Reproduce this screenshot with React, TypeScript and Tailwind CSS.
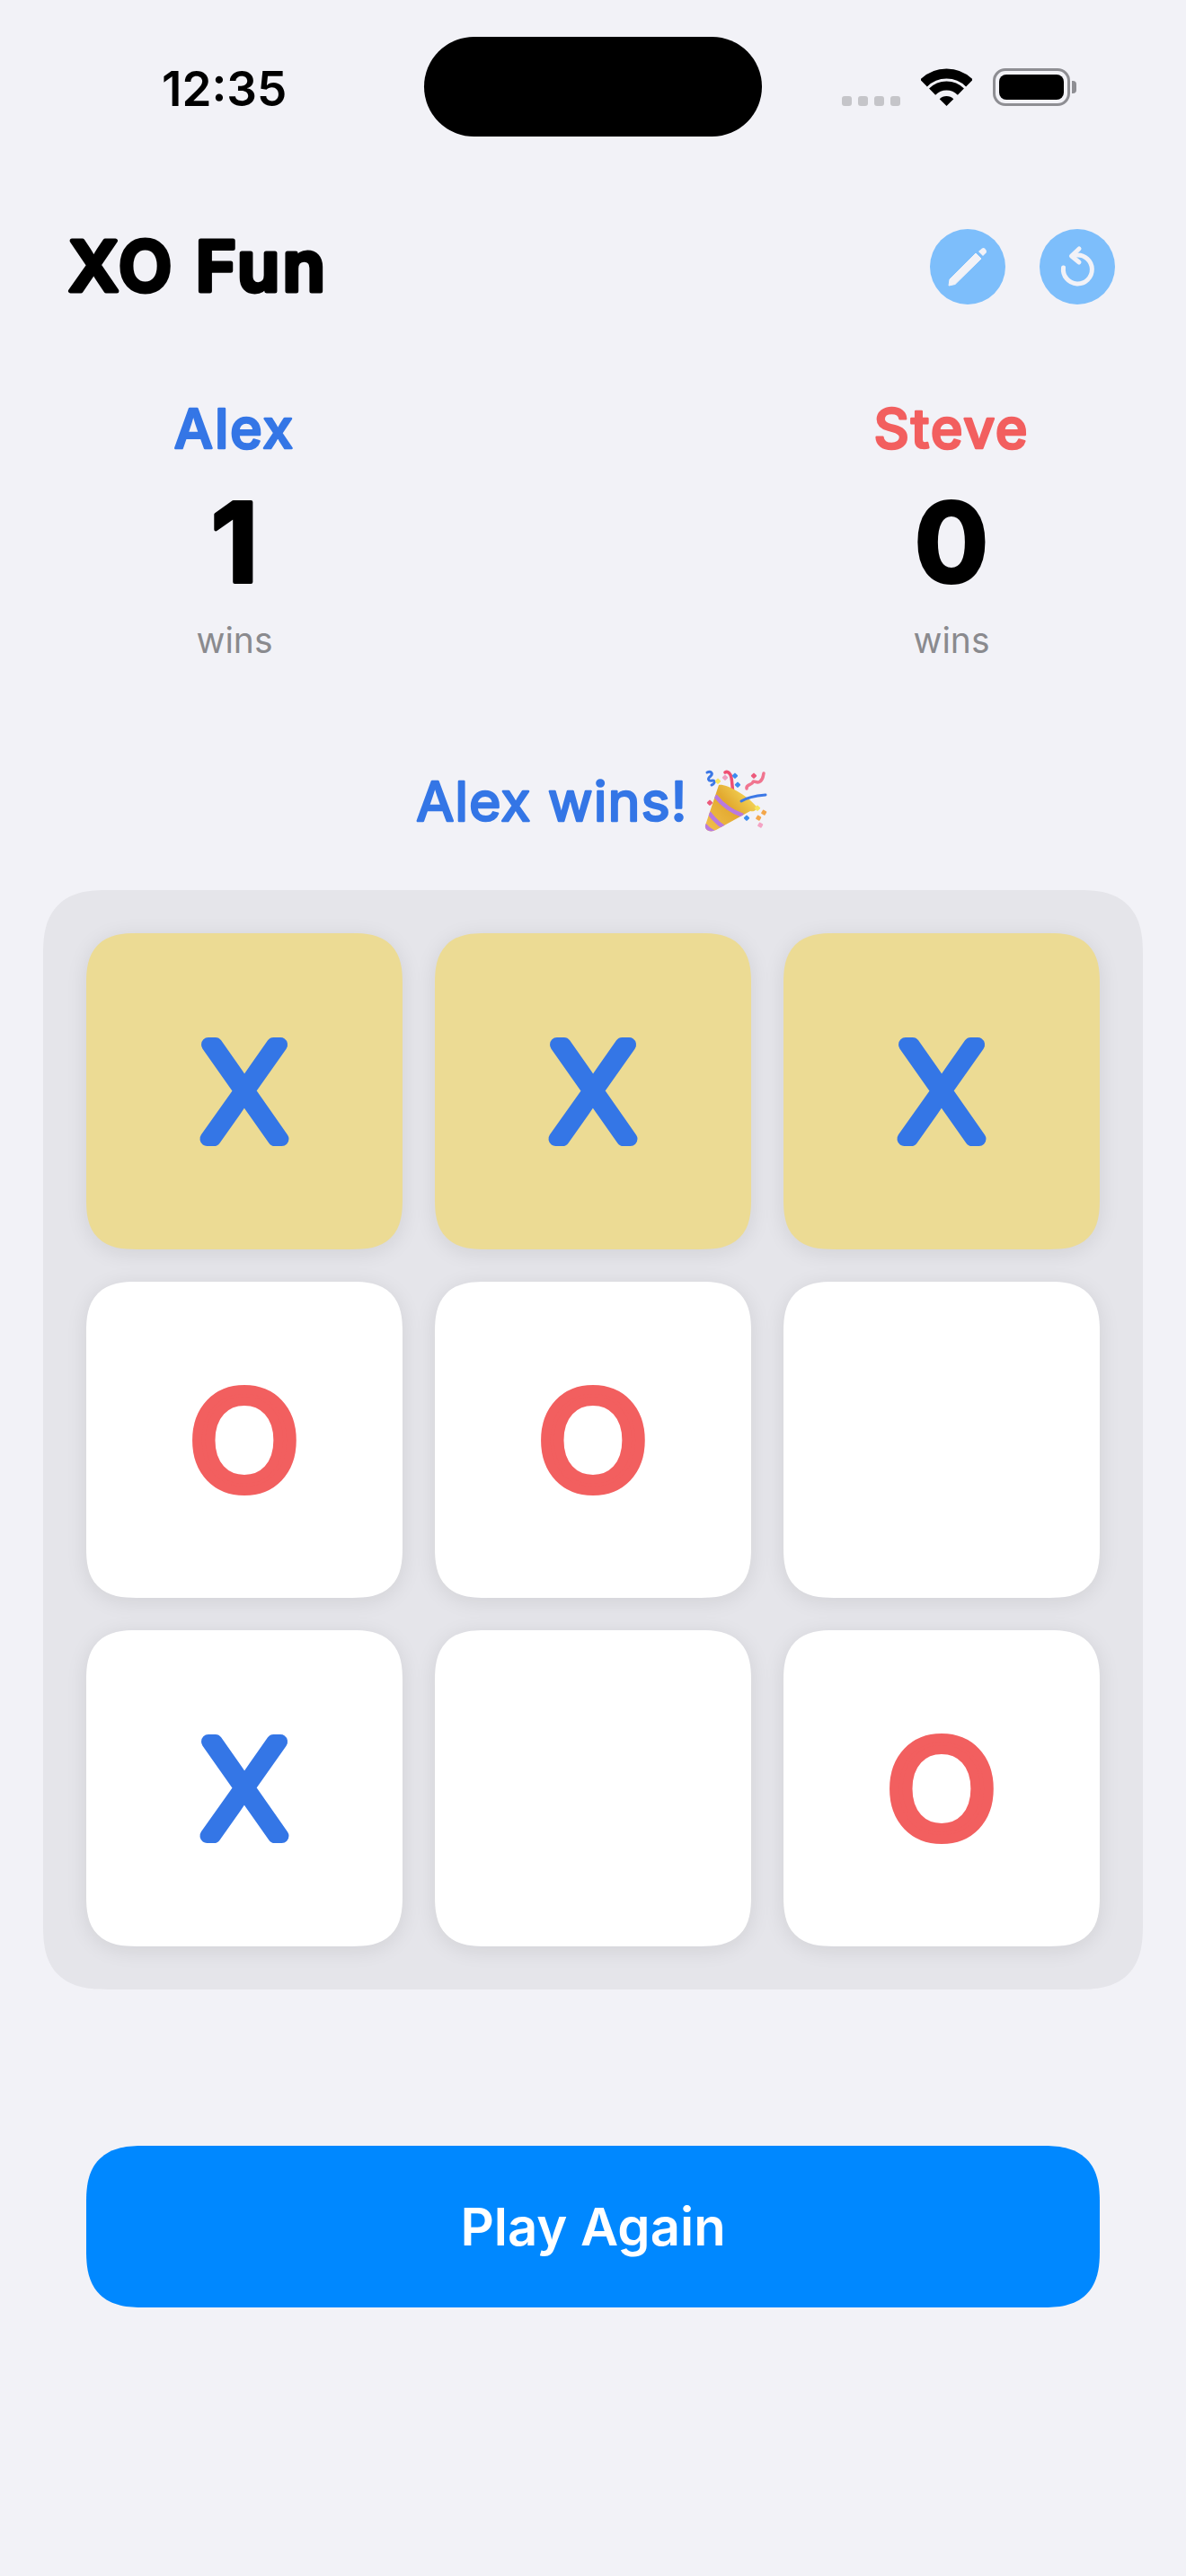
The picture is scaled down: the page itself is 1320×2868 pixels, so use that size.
import React from "react";

type Mark = "X" | "O" | "";

const blue = "#3476e6";
const red = "#f25f5f";

const board: { mark: Mark; win?: boolean }[] = [
  { mark: "X", win: true },
  { mark: "X", win: true },
  { mark: "X", win: true },
  { mark: "O" },
  { mark: "O" },
  { mark: "" },
  { mark: "X" },
  { mark: "" },
  { mark: "O" },
];

// the app uses a rounded font, a round-joined stroke on svg text gets close to it
const RoundText = ({
  text,
  w,
  h,
  y,
  size,
  weight,
  stroke,
  color,
  spacing = 0,
  center = false,
}: {
  text: string;
  w: number;
  h: number;
  y: number;
  size: number;
  weight: number;
  stroke: number;
  color: string;
  spacing?: number;
  center?: boolean;
}) => (
  <svg width={w} height={h} viewBox={`0 0 ${w} ${h}`} className="overflow-visible">
    <text
      x={center ? w / 2 : stroke / 2}
      y={y}
      textAnchor={center ? "middle" : "start"}
      fontSize={size}
      fontWeight={weight}
      letterSpacing={spacing}
      fill={color}
      stroke={color}
      strokeWidth={stroke}
      strokeLinejoin="round"
    >
      {text}
    </text>
  </svg>
);

const CellMark = ({ mark }: { mark: Mark }) => {
  if (!mark) return null;
  const isX = mark === "X";
  const color = isX ? blue : red;
  return (
    <svg width="352" height="352" viewBox="0 0 352 352">
      <g transform={`translate(176 0) scale(${isX ? 0.99 : 1.07} 1)`}>
        <text
          x="0"
          y={isX ? 229 : 232}
          textAnchor="middle"
          fontSize={isX ? 145 : 152}
          fontWeight={isX ? 200 : 400}
          fill={color}
          stroke={color}
          strokeWidth={isX ? 16 : 10}
          strokeLinejoin="round"
        >
          {mark}
        </text>
      </g>
    </svg>
  );
};

const Wifi = () => (
  <svg width="57" height="42" viewBox="0 0 57 42" fill="none">
    <path d="M3 16.5A36 36 0 0 1 54 16.5" stroke="#000" strokeWidth="11" />
    <path d="M12.6 26.1A22.5 22.5 0 0 1 44.4 26.1" stroke="#000" strokeWidth="10" />
    <path d="M28.5 42L20.7 34.2A11 11 0 0 1 36.3 34.2Z" fill="#000" />
  </svg>
);

const Pencil = () => (
  <svg width="84" height="84" viewBox="0 0 84 84" fill="#f2f2f7">
    <path d="M21 63L22 56L51 27L57 33L28 61.5Z" strokeLinejoin="round" stroke="#f2f2f7" strokeWidth="1" />
    <path d="M54 25L58 21.5Q59.5 20.5 61 21.5L62.5 23.5Q63.5 25 62.5 26.5L59 30Z" />
  </svg>
);

const Reset = () => (
  <svg width="84" height="84" viewBox="0 0 84 84" fill="none" stroke="#f2f2f7" strokeWidth="5" strokeLinecap="round" strokeLinejoin="round">
    <path d="M41 29A16 16 0 1 1 26.5 43" />
    <path d="M44 22L35.5 30L44 37" />
  </svg>
);

// party popper emoji, no colour emoji font to lean on
const Popper = () => (
  <svg width="90" height="90" viewBox="0 0 90 90" fill="none">
    <defs>
      <linearGradient id="cone" x1="20" y1="75" x2="65" y2="35" gradientUnits="userSpaceOnUse">
        <stop offset="0" stopColor="#f0bd4a" />
        <stop offset="0.55" stopColor="#e2a92f" />
        <stop offset="1" stopColor="#f5d75a" />
      </linearGradient>
      <clipPath id="coneClip">
        <path d="M31 28C37 26 60 37 73 52C74 56 70 58 66 57L28 78C22 81 15 79 16 73Z" />
      </clipPath>
    </defs>
    <path d="M18 14C22 12 25 15 22 18C18 21 19 24 24 23C28 23 26 27 23 28" stroke="#3c78e6" strokeWidth="3" strokeLinecap="round" />
    <path d="M38 14C41 12 44 15 45 20C46 25 46 32 47 37" stroke="#ef4f72" strokeWidth="3.5" strokeLinecap="round" />
    <path d="M62 32C61 27 68 28 69 25C69 22 74 27 77 24C81 21 80 18 81 15" stroke="#f0748f" strokeWidth="3.5" strokeLinecap="round" />
    <path d="M31 28C37 26 60 37 73 52C74 56 70 58 66 57L28 78C22 81 15 79 16 73Z" fill="url(#cone)" />
    <g clipPath="url(#coneClip)" stroke="#b97adf" strokeWidth="4.5">
      <path d="M27 40C35 50 46 58 58 62" />
      <path d="M20 59C27 68 33 74 42 78" />
      <path d="M15 72C18 76 22 79 26 81" />
    </g>
    <path d="M56 46C62 42 72 40 83 39" stroke="#3c78e6" strokeWidth="3" strokeLinecap="round" />
    <rect x="28" y="21" width="5" height="5" rx="1" fill="#f6e45c" transform="rotate(45 30 23)" />
    <rect x="36" y="17" width="5" height="5" rx="1" fill="#ef9fc0" transform="rotate(45 38 19)" />
    <rect x="47" y="15" width="5" height="5" rx="1" fill="#3c8cf0" transform="rotate(45 49 17)" />
    <rect x="50" y="25" width="5" height="5" rx="1" fill="#3c8cf0" transform="rotate(45 52 27)" />
    <rect x="68" y="15" width="5" height="5" rx="1" fill="#ec5a7c" transform="rotate(45 70 17)" />
    <rect x="19" y="45" width="5" height="5" rx="1" fill="#ec5a7c" transform="rotate(45 21 47)" />
    <rect x="72" y="51" width="5" height="5" rx="1" fill="#f6e45c" transform="rotate(45 74 53)" />
    <rect x="60" y="62" width="5" height="5" rx="1" fill="#3c8cf0" transform="rotate(45 62 64)" />
    <rect x="73" y="62" width="5" height="5" rx="1" fill="#f3a64a" transform="rotate(30 75 64)" />
    <rect x="79" y="56" width="5" height="5" rx="1" fill="#f3a64a" transform="rotate(30 81 58)" />
    <rect x="75" y="70" width="5" height="5" rx="1" fill="#f4a3c4" transform="rotate(30 77 72)" />
  </svg>
);

const Score = ({ name, wins, color }: { name: string; wins: number; color: string }) => (
  <div className="flex flex-col items-center w-[300px]">
    <RoundText text={name} w={300} h={76} y={60.5} size={61} weight={500} stroke={2.5} spacing={1.8} color={color} center />
    <RoundText text={String(wins)} w={300} h={168} y={134} size={122} weight={700} stroke={4} color="#000" center />
    <div className="mt-[9px] text-[39px] leading-[44px] text-[#8a8a8e]">wins</div>
  </div>
);

export default function App() {
  return (
    <div className="min-h-[2868px] bg-[#f2f2f7] font-['Inter',sans-serif]">
      {/* Status bar */}
      <div className="flex items-center pt-[41px] pl-[180px]">
        <div className="w-[292px] text-[53px] leading-[60px] font-semibold text-black mt-[4px]">12:35</div>
        <div className="w-[376px] h-[111px] rounded-[56px] bg-black" />
        <div className="flex items-end ml-[89px] h-[42px]">
          <div className="flex gap-[7px] mr-[23px]">
            <div className="w-[11px] h-[11px] rounded-[3px] bg-[#c5c5c9]" />
            <div className="w-[11px] h-[11px] rounded-[3px] bg-[#c5c5c9]" />
            <div className="w-[11px] h-[11px] rounded-[3px] bg-[#c5c5c9]" />
            <div className="w-[11px] h-[11px] rounded-[3px] bg-[#c5c5c9]" />
          </div>
          <Wifi />
          <div className="flex items-center ml-[23px] h-[42px]">
            <div className="w-[86px] h-[42px] rounded-[14px] border-[3px] border-[#8e8e93] p-[4px]">
              <div className="w-full h-full rounded-[8px] bg-black" />
            </div>
            <div className="w-[5px] h-[14px] ml-[2px] rounded-r-[4px] bg-[#8e8e93]" />
          </div>
        </div>
      </div>

      {/* Header */}
      <div className="flex items-center justify-between mt-[103px] pl-[74px] pr-[79px] h-[84px]">
        <h1>
          <RoundText text="XO Fun" w={300} h={84} y={69} size={77} weight={600} stroke={5} spacing={3.6} color="#000" />
        </h1>
        <div className="flex gap-[38px]">
          <button className="w-[84px] h-[84px] rounded-full bg-[#7dbefb]">
            <Pencil />
          </button>
          <button className="w-[84px] h-[84px] rounded-full bg-[#7dbefb]">
            <Reset />
          </button>
        </div>
      </div>

      {/* Scores */}
      <div className="flex justify-between mt-[99px] px-[111px]">
        <Score name="Alex" wins={1} color={blue} />
        <Score name="Steve" wins={0} color={red} />
      </div>

      {/* Status */}
      <div className="flex items-center justify-center mt-[118px] h-[76px]">
        <RoundText text="Alex wins!" w={307} h={76} y={60.5} size={61} weight={400} stroke={2.5} spacing={1} color={blue} />
        <Popper />
      </div>

      {/* Board */}
      <div className="mx-[48px] mt-[62px] p-[48px] rounded-[72px] [corner-shape:superellipse(1.4)] bg-[#e5e5ea] grid grid-cols-3 gap-[36px]">
        {board.map((cell, i) => (
          <div
            key={i}
            className={`h-[352px] rounded-[56px] [corner-shape:superellipse(1.4)] shadow-[0_4px_24px_rgba(0,0,0,0.09)] ${
              cell.win ? "bg-[#ecdb94]" : "bg-white"
            }`}
          >
            <CellMark mark={cell.mark} />
          </div>
        ))}
      </div>

      {/* Play again */}
      <div className="px-[96px] mt-[174px]">
        <button className="w-full h-[180px] rounded-[64px] [corner-shape:superellipse(1.4)] bg-[#0088ff] text-white text-[58px] font-semibold">
          Play Again
        </button>
      </div>
    </div>
  );
}
